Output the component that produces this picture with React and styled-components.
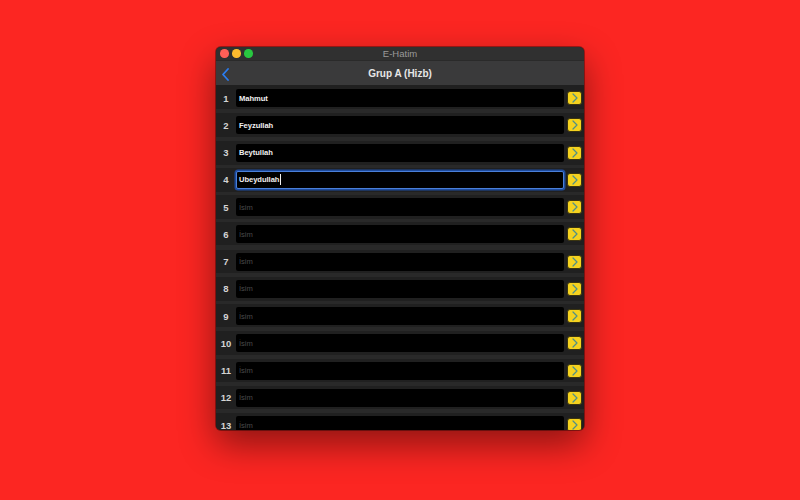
import styled, { createGlobalStyle } from "styled-components"

const GlobalStyle = createGlobalStyle`
    html, body {
        margin: 0;
        padding: 0;
        background: #fc2622;
        font-family: 'Liberation Sans', Arial, sans-serif;
    }
    #root {
        width: 800px;
        height: 500px;
        overflow: hidden;
    }
`

const Desktop = styled.div`
    width: 800px;
    height: 500px;
    display: flex;
    justify-content: center;
    align-items: flex-start;
    padding-top: 47px;
    box-sizing: border-box;
`

const Window = styled.div`
    width: 368px;
    height: 383px;
    display: flex;
    flex-direction: column;
    border-radius: 5px;
    overflow: hidden;
    background: #222222;
    box-shadow: 0 0 0 1px rgba(0, 0, 0, 0.35), 0 14px 36px rgba(0, 0, 0, 0.45);
`

const TitleBar = styled.div`
    height: 13px;
    flex-shrink: 0;
    position: relative;
    display: flex;
    align-items: center;
    justify-content: center;
    background: #303030;
    .title{
        font-size: 9.5px;
        color: #9a9a9a;
    }
`

const Lights = styled.div`
    position: absolute;
    left: 4px;
    top: 2px;
    display: flex;
    gap: 3.5px;
`

const Light = styled.span`
    width: 8.5px;
    height: 8.5px;
    border-radius: 50%;
    background: ${p => p.color};
`

const NavBar = styled.div`
    height: 25px;
    flex-shrink: 0;
    position: relative;
    display: flex;
    align-items: center;
    justify-content: center;
    background: #3a3a3b;
    border-top: 1px solid #2a2a2a;
    box-sizing: border-box;
    .heading{
        font-size: 10px;
        font-weight: 700;
        color: #e6e6e6;
    }
`

const BackButton = styled.div`
    position: absolute;
    left: 5px;
    top: 6px;
    width: 10px;
    height: 13px;
`

const List = styled.div`
    flex: 1;
    overflow: hidden;
    padding-top: 1px;
    background: #202020;
`

const Row = styled.div`
    height: 27.25px;
    display: flex;
    align-items: flex-start;
    padding-top: 3px;
    box-sizing: border-box;
    background: linear-gradient(to bottom, #202020 0, #202020 23.5px, #292929 23.5px, #292929 100%);
`

const Num = styled.div`
    width: 20px;
    height: 18px;
    flex-shrink: 0;
    display: flex;
    align-items: center;
    justify-content: center;
    font-size: 9.5px;
    font-weight: 700;
    color: #d4d4d4;
`

const Field = styled.div`
    flex: 1;
    height: 18px;
    display: flex;
    align-items: center;
    padding-left: 2px;
    box-sizing: border-box;
    background: #000;
    border-radius: 2px;
    font-size: 7.6px;
    letter-spacing: -0.05px;
    color: ${p => p.$empty ? "#4a4a4a" : "#f0f0f0"};
    font-weight: ${p => p.$empty ? 400 : 700};
    border: 1px solid ${p => p.$focused ? "#4a7fd8" : "transparent"};
    box-shadow: ${p => p.$focused ? "0 0 0 1.5px #1d4a9c" : "none"};
`

const Caret = styled.span`
    display: inline-block;
    width: 1px;
    height: 11px;
    margin-left: 1px;
    background: #f2f2f2;
`

const GoButton = styled.div`
    width: 15px;
    height: 14px;
    margin: 2px 2px 0 3px;
    flex-shrink: 0;
    display: flex;
    align-items: center;
    justify-content: center;
    background: #f5d21f;
    border: 1px solid #3a3410;
    border-radius: 3px;
    box-sizing: border-box;
`

const names = ["Mahmut", "Feyzullah", "Beytullah", "Ubeydullah", "", "", "", "", "", "", "", "", ""]

const App = () => {
    return (
        <>
            <GlobalStyle />
            <Desktop>
                <Window>
                    <TitleBar>
                        <Lights>
                            <Light color="#fe5f57" />
                            <Light color="#febc2e" />
                            <Light color="#28c840" />
                        </Lights>
                        <span className="title">E-Hatim</span>
                    </TitleBar>
                    <NavBar>
                        <BackButton>
                            <svg width="10" height="13" viewBox="0 0 10 13">
                                <polyline points="7,1 2,6.5 7,12" fill="none" stroke="#2a7cf0" strokeWidth="1.8" strokeLinecap="round" strokeLinejoin="round" />
                            </svg>
                        </BackButton>
                        <span className="heading">Grup A (Hizb)</span>
                    </NavBar>
                    <List>
                        {names.map((name, i) => (
                            <Row key={i}>
                                <Num>{i + 1}</Num>
                                <Field $empty={!name} $focused={i === 3}>
                                    {name || "İsim"}
                                    {i === 3 && <Caret />}
                                </Field>
                                <GoButton>
                                    <svg width="8" height="10" viewBox="0 0 8 10">
                                        <polyline points="2,1 6,5 2,9" fill="none" stroke="#4f9088" strokeWidth="1.2" strokeLinecap="round" strokeLinejoin="round" />
                                    </svg>
                                </GoButton>
                            </Row>
                        ))}
                    </List>
                </Window>
            </Desktop>
        </>
    )
}

export default App
